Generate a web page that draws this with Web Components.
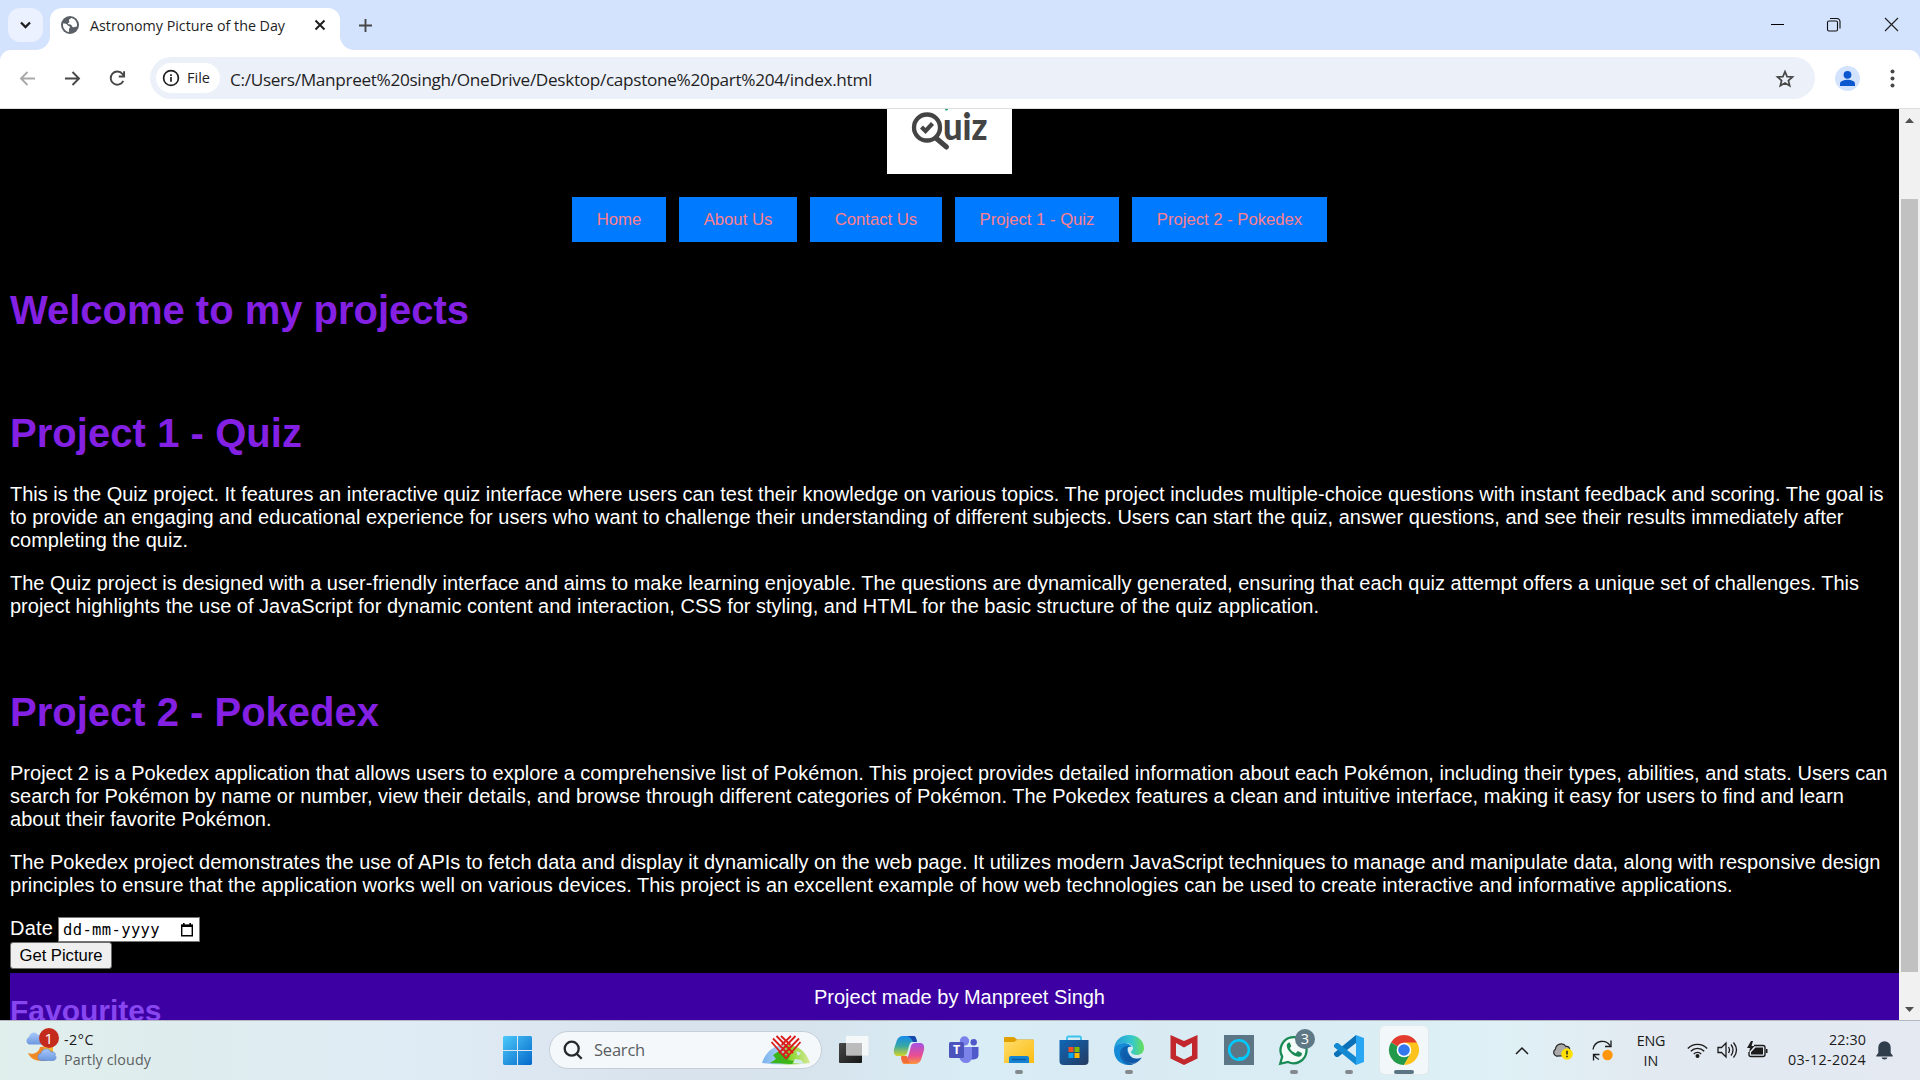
<!DOCTYPE html>
<html lang="en">
<head>
<meta charset="utf-8">
<title>Astronomy Picture of the Day</title>
<style>
html,body{margin:0;padding:0;height:1080px;width:1920px;overflow:hidden;background:#000}
</style>
</head>
<body>
<desktop-screen></desktop-screen>
<script>
const define=(name,html)=>{
  const t=document.createElement('template');t.innerHTML=html;
  customElements.define(name,class extends HTMLElement{
    constructor(){super();this.attachShadow({mode:'open'}).append(t.content.cloneNode(true));}
  });
};
const UI='"Open Sans","Noto Sans",sans-serif';

define('desktop-screen',`<style>:host{display:flex;flex-direction:column;width:1920px;height:1080px;overflow:hidden}</style>
<tab-strip></tab-strip><tool-bar></tool-bar><page-viewport></page-viewport><task-bar></task-bar>`);

define('tab-strip',`<style>
:host{display:flex;height:50px;background:#d3e3fd;font:14.3px/20px ${UI};color:#1f1f1f}
.s{margin:8px 7px 0 8px;width:35px;height:34px;border-radius:12px;background:#ebf1fe;flex:none}
.tab{margin-top:8px;width:290px;height:42px;background:#fff;border-radius:12px 12px 0 0;display:flex;align-items:center;box-sizing:border-box;padding:0 14px 8px 11px;position:relative}
.tab::before,.tab::after{content:"";position:absolute;bottom:0;width:14px;height:14px}
.tab::before{left:-14px;background:radial-gradient(circle at 0 0,transparent 13.5px,#fff 14.3px)}
.tab::after{right:-14px;background:radial-gradient(circle at 100% 0,transparent 13.5px,#fff 14.3px)}
fit-text{margin-left:11px;margin-right:auto;padding-top:1px}
svg{display:block;flex:none}
.plus{margin:15px 0 0 15px}
.win{margin-left:auto;display:flex;padding:17px 21px 0 0;gap:42px}
</style>
<svg class="s" viewBox="0 0 35 34" fill="none" stroke="#1f1f1f" stroke-width="2.3"><path d="M13 14.5l4.5 4.5 4.5-4.5"/></svg>
<div class="tab">
<svg width="18" height="18" viewBox="0 0 18 18"><circle cx="9" cy="9" r="9" fill="#5b6066"/><path d="M2 7.6c2.3.1 3.7.2 4.600 1.600.6 1 1.800.3 2.300 1.500.4 1.200-1 1.600-1 2.700 0 .8.3 1.500.2 2.500C4.500 15.500 2 12.500 2 9zM10 2.100c-.3 1-1.600 1-2 1.800-.4 1 .6 1.300.4 2.200-.2 1-1.700.7-1.500 1.700.3 1.200 2.400.3 3.400 1.200.9.8.6 1.900 1.600 2.200 1.300.4 2-.6 3.700-.5.4-.9.5-1.500.4-2.300C15.600 5 13.200 2.500 10 2.100z" fill="#fff"/></svg>
<fit-text w="195">Astronomy Picture of the Day</fit-text>
<svg width="12" height="12" viewBox="0 0 12 12" stroke="#1f1f1f" stroke-width="2"><path d="M1.500 1.500l9 9M10.500 1.500l-9 9"/></svg>
</div>
<svg class="plus" width="21" height="21" viewBox="0 0 21 21" stroke="#474747" stroke-width="1.900"><path d="M10.500 4v13M4 10.500h13"/></svg>
<div class="win">
<svg width="15" height="15" viewBox="0 0 15 15" stroke="#000"><path d="M1 7.500h13"/></svg>
<svg style="margin:0 1px 0 -1px" width="15" height="15" viewBox="0 0 15 15" fill="none" stroke="#111" stroke-width="1.100"><rect x="1.500" y="4" width="10" height="10" rx="1.500"/><path d="M4 1.500h7a3 3 0 0 1 3 3v7"/></svg>
<svg width="15" height="15" viewBox="0 0 15 15" stroke="#222" stroke-width="1.200"><path d="M1 1l13 13M14 1L1 14"/></svg>
</div>`);

define('tool-bar',`<style>
:host{display:block;background:#d3e3fd;height:59px}
.bar{display:flex;align-items:center;height:59px;box-sizing:border-box;border-bottom:1px solid #dcdfe2;background:#fff;border-radius:11px 11px 0 0;padding:0 17px 2px 17px}
svg{display:block;flex:none}
.nav{display:flex;gap:24px}
.omni{margin:0 20px 0 22px;width:1665px;height:42px;border-radius:21px;background:#ecf0f9;display:flex;align-items:center;box-sizing:border-box;padding:0 20px 0 6px;font:17.200px/24px ${UI};color:#1f1f1f}
.chip{width:64px;height:30px;border-radius:15px;background:#fff;display:flex;align-items:center;box-sizing:border-box;padding-left:6px;gap:7px;font-size:14.500px;font-weight:500;margin-right:10px;flex:none}
.url{margin-right:auto;padding-top:3px}
.omni>svg{margin-top:2px}
.p{margin-right:22px}
</style>
<div class="bar">
<div class="nav">
<svg width="21" height="21" viewBox="0 0 21 21" fill="none" stroke="#a9a9a9" stroke-width="1.900"><path d="M18 10.500H4.500M10.500 4L4 10.500l6.500 6.500"/></svg>
<svg width="21" height="21" viewBox="0 0 21 21" fill="none" stroke="#474747" stroke-width="1.900"><path d="M3 10.500h13.500M10.500 4l6.500 6.500-6.500 6.500"/></svg>
<svg width="21" height="21" viewBox="0 0 21 21" fill="none" stroke="#474747" stroke-width="1.900"><path d="M16.300 12.800A6.600 6.600 0 1 1 15.500 6l1.500 2M17.100 3.200v5.300h-5.300"/></svg>
</div>
<div class="omni"><div class="chip"><svg width="18" height="18" viewBox="0 0 18 18" fill="none" stroke="#1f1f1f" stroke-width="1.700"><circle cx="9" cy="9" r="7.400"/><path d="M9 8v4.800M9 5.200v1.700"/></svg><fit-text w="23">File</fit-text></div>
<fit-text class="url" w="642">C:/Users/Manpreet%20singh/OneDrive/Desktop/capstone%20part%204/index.html</fit-text>
<svg width="20" height="20" viewBox="0 0 20 20" fill="none" stroke="#474747" stroke-width="1.700"><path d="M10 2.600l2.100 5 5.400.4-4.100 3.500 1.300 5.300L10 14l-4.700 2.800 1.300-5.300L2.500 8l5.400-.4z"/></svg></div>
<svg class="p" width="25" height="25" viewBox="0 0 25 25"><circle cx="12.500" cy="12.500" r="12.500" fill="#d3e3fd"/><g fill="#0b57d0"><circle cx="12.500" cy="8.800" r="3.900"/><path d="M5 20v-2.200c0-3 4.500-4 7.500-4s7.500 1 7.500 4V20z"/></g></svg>
<svg width="21" height="21" viewBox="0 0 21 21" fill="#474747"><circle cx="10.500" cy="3.500" r="2"/><circle cx="10.500" cy="10.500" r="2"/><circle cx="10.500" cy="17.500" r="2"/></svg>
</div>`);

define('page-viewport',`<style>
:host{display:flex;height:911px;background:#000}
main{width:1899px;height:911px;overflow:hidden;position:relative;box-sizing:border-box;padding-left:10px;color:#fff;font:20px/23px "Liberation Sans",Arial,sans-serif}
.logo{display:block;margin:0 auto;position:relative;left:-5px}
nav{display:flex;justify-content:center;gap:13px;padding:23px 10px 0 0}
.date{display:flex;gap:5px;align-items:center;height:25px;margin-top:20px}
.date>fit-text{margin-bottom:2px}
.inp{width:142px;height:25px;box-sizing:border-box;border:1px solid #767676;background:#fff;color:#000;display:flex;align-items:center;padding:0 5px 0 4px;font:15.500px/22px "DejaVu Sans Mono",monospace;justify-content:space-between}
.btn{width:102px;height:27px;box-sizing:border-box;border:1px solid #6b6b6b;border-radius:3px;background:#efefef;color:#000;display:flex;align-items:center;justify-content:center;font-size:16.670px;line-height:20px}
.fav{height:70px;background:#3c00a3;margin-top:4px;padding-top:21px}
h2{margin:0;font:bold 30px/34px "Liberation Sans",Arial,sans-serif;color:#8746ef}
footer{position:absolute;left:10px;bottom:0;width:1899px;height:47px;display:flex;align-items:center;justify-content:center;box-sizing:border-box;padding-top:2px}
</style>
<main>
<svg class="logo" width="125" height="65" viewBox="0 0 125 65"><rect width="125" height="65" fill="#fff"/><circle cx="59.500" cy="0" r="1.600" fill="#24a06b"/>
<g fill="none" stroke="#444"><circle cx="40" cy="18.500" r="13" stroke-width="4.300"/><path d="M49.500 29.500l10 8.500" stroke-width="5" stroke-linecap="round"/><path d="M34.500 18l4 4 7-7.500" stroke-width="4.200"/></g>
<text x="56" y="31" font-family="Lato,sans-serif" font-weight="900" font-size="37" textLength="44.500" lengthAdjust="spacingAndGlyphs" fill="#444">uiz</text></svg>
<nav><nav-link style="width:94px">Home</nav-link><nav-link style="width:118px">About Us</nav-link><nav-link style="width:132px">Contact Us</nav-link><nav-link style="width:164px">Project 1 - Quiz</nav-link><nav-link style="width:195px">Project 2 - Pokedex</nav-link></nav>
<page-heading style="margin-top:45px"><fit-text w="459">Welcome to my projects</fit-text></page-heading>
<page-heading style="margin-top:77px"><fit-text w="292">Project 1 - Quiz</fit-text></page-heading>
<text-block style="margin-top:27px"><fit-text w="1873.500">This is the Quiz project. It features an interactive quiz interface where users can test their knowledge on various topics. The project includes multiple-choice questions with instant feedback and scoring. The goal is</fit-text><fit-text w="1833.500">to provide an engaging and educational experience for users who want to challenge their understanding of different subjects. Users can start the quiz, answer questions, and see their results immediately after</fit-text><fit-text w="178">completing the quiz.</fit-text></text-block>
<text-block style="margin-top:20px"><fit-text w="1849">The Quiz project is designed with a user-friendly interface and aims to make learning enjoyable. The questions are dynamically generated, ensuring that each quiz attempt offers a unique set of challenges. This</fit-text><fit-text w="1309">project highlights the use of JavaScript for dynamic content and interaction, CSS for styling, and HTML for the basic structure of the quiz application.</fit-text></text-block>
<page-heading style="margin-top:71px"><fit-text w="369">Project 2 - Pokedex</fit-text></page-heading>
<text-block style="margin-top:27px"><fit-text w="1877.500">Project 2 is a Pokedex application that allows users to explore a comprehensive list of Pokémon. This project provides detailed information about each Pokémon, including their types, abilities, and stats. Users can</fit-text><fit-text w="1834">search for Pokémon by name or number, view their details, and browse through different categories of Pokémon. The Pokedex features a clean and intuitive interface, making it easy for users to find and learn</fit-text><fit-text w="261.500">about their favorite Pokémon.</fit-text></text-block>
<text-block style="margin-top:20px"><fit-text w="1870.500">The Pokedex project demonstrates the use of APIs to fetch data and display it dynamically on the web page. It utilizes modern JavaScript techniques to manage and manipulate data, along with responsive design</fit-text><fit-text w="1722.500">principles to ensure that the application works well on various devices. This project is an excellent example of how web technologies can be used to create interactive and informative applications.</fit-text></text-block>
<div class="date"><fit-text w="43">Date</fit-text><div class="inp"><fit-text w="97">dd-mm-yyyy</fit-text><svg width="14" height="16" viewBox="0 0 14 16"><path d="M1.700 3.500v10.300h10.600V3.500z" fill="none" stroke="#000" stroke-width="1.400"/><path d="M1 2.500h12v2.500H1zM3 1h1.600v2H3zM9.400 1H11v2H9.400z"/></svg></div></div>
<div class="btn"><fit-text w="83">Get Picture</fit-text></div>
<div class="fav"><h2><fit-text w="151.500">Favourites</fit-text></h2></div>
<footer><fit-text w="291">Project made by Manpreet Singh</fit-text></footer>
</main><scroll-bar></scroll-bar>`);

define('nav-link',`<style>:host{display:flex;height:45px;background:#007bff;color:#ff7f8c;align-items:center;justify-content:center;font:16.670px/20px "Liberation Sans",Arial,sans-serif;white-space:nowrap}</style><slot></slot>`);
define('page-heading',`<style>:host{display:block;height:46px;font:bold 40px/46px "Liberation Sans",Arial,sans-serif;color:#8420e3}</style><slot></slot>`);
define('text-block',`<style>:host{display:flex;flex-direction:column;align-items:flex-start}</style><slot></slot>`);
define('scroll-bar',`<style>:host{display:flex;flex-direction:column;align-items:center;width:21px;height:911px;background:#f1f1f1;box-sizing:border-box;padding:9px 0 8px}
.t{width:17px;height:773px;background:#c1c1c1;margin:76px 0 auto}svg{display:block}</style>
<svg width="9" height="5" viewBox="0 0 9 5"><path d="M0 5L4.500 0 9 5z" fill="#505050"/></svg><div class="t"></div><svg width="9" height="5" viewBox="0 0 9 5"><path d="M0 0l4.500 5L9 0z" fill="#505050"/></svg>`);

define('task-app',`<style>:host{display:flex;flex:none;width:55px;height:59px;align-items:center;justify-content:center}
.b{width:48px;height:48px;box-sizing:border-box;border-radius:5px;display:flex;flex-direction:column;align-items:center;padding-top:9px;margin-top:-1px}
i{display:block;width:8px;height:4px;border-radius:2px;margin-top:5px}
:host([open]) i{background:#84898d}
:host([active]) .b{background:#f2f8fa;box-shadow:0 0 0 1px #e1e9ec}
:host([active]) i{background:#5c7584;width:20px}
::slotted(svg){display:block;width:30px;height:30px;overflow:visible}</style><div class="b"><slot></slot><i></i></div>`);

define('task-bar',`<style>
:host{display:flex;height:60px;box-sizing:border-box;border-top:1px solid #b4b7c2;background:linear-gradient(90deg,#e0efec 0,#dfecee 180px,#e0ecf5 400px,#d9e3ee 650px,#d7e3ed 800px,#d8edf5 980px,#d9eaf3 1150px,#daeef4 1400px,#dff1f6 1500px,#e2e9f1 1650px,#e4e9f2 1920px);font:14.300px/20px ${UI};color:#1b1b1b;align-items:center}
svg{display:block;flex:none}
.w{display:flex;width:503px;height:59px;gap:4px}
.w>svg{margin:5px 0 0 24px}
.w>div{display:flex;flex-direction:column;padding-top:9px;align-items:flex-start}
.w .c{color:#5c6162}
.search{margin-left:17px;width:273px;height:38px;box-sizing:border-box;border-radius:19px;background:#f4f8fb;border:1px solid #c6cfd9;display:flex;align-items:center;padding:0 11px 0 13px;font-size:16.500px;color:#5a5e61;margin-top:-1px}
.search fit-text{margin:0 auto 0 11px}
.apps{display:flex;margin-left:4px}
.tray{display:flex;align-items:center;margin-left:auto;height:59px;padding-right:27px}
.col{display:flex;flex-direction:column}
</style>
<div class="w"><svg width="36" height="42" viewBox="0 0 36 42"><defs><linearGradient id="cl" x2="0" y2="1"><stop stop-color="#a9c8fa"/><stop offset="1" stop-color="#6c98e0"/></linearGradient></defs><path d="M4 27c5 2 11 0 12-6l13-1v7c-1 5-5 8-11 8-7 0-12-3-14-8z" fill="#f08a24"/><path d="M20 20h9v5l-9 3z" fill="#f5b335"/><path d="M5 18.500a4 4 0 0 1 0-7.500c1-5 7-6 9-2 4-1 7 2 6 6 0 2-1 3.500-3 3.500z" fill="url(#cl)"/><path d="M17 34.500a3.700 3.700 0 0 1 0-7.300c1-5 8-6 10-1.200 4-.5 5 2 4 3.500 2 1.500 1 5-2 5z" fill="url(#cl)" stroke="#5a84cd" stroke-width=".6"/><circle cx="25" cy="12" r="10" fill="#c42b1c"/><text x="24.800" y="17.500" text-anchor="middle" font-family="Open Sans" font-size="15" fill="#fff">1</text></svg>
<div><fit-text w="30">-2°C</fit-text><fit-text class="c" w="87">Partly cloudy</fit-text></div></div>
<svg width="29" height="29" viewBox="0 0 29 29"><defs><linearGradient id="wn" x2="1" y2="1"><stop stop-color="#4cc9fa"/><stop offset="1" stop-color="#0468ca"/></linearGradient></defs><path fill="url(#wn)" d="M1 0h13v14H0V1zM15 0h13l1 1v13H15zM0 15h14v14H1l-1-1zM15 15h14v13l-1 1H15z"/></svg>
<div class="search"><svg width="20" height="20" viewBox="0 0 20 20" fill="none" stroke="#23282b" stroke-width="2.300"><circle cx="8.700" cy="8.700" r="7"/><path d="M13.700 13.700l5 5"/></svg><fit-text w="51">Search</fit-text>
<svg width="48" height="30" viewBox="0 0 48 30"><defs><linearGradient id="gl"><stop stop-color="#79b2f0"/><stop offset=".4" stop-color="#aed3f3"/><stop offset=".55" stop-color="#82d528"/><stop offset="1" stop-color="#d6e998"/></linearGradient></defs><path d="M0 28Q6 10 24 10t24 18q-24 3-48 0z" fill="url(#gl)"/><path d="M8 28l6-4-3-4 6-4 4 3 7 2-2 4 6 1-2 3z" fill="#3bb51b"/><path d="M31 28l2-4 6 1 3 4zM34 16l5 2-3 3z" fill="#d5ecef"/><path d="M9.500 7L24 23.500 38.500 7M11 3.500l16.500 17M37 3.500l-16.500 17M14.500 1L31 18M33.500 1L17 18M19 1l9.500 9M29 1l-9.500 9" fill="none" stroke="#db1b1b" stroke-width="1.800"/></svg></div>
<div class="apps">
<task-app><svg viewBox="0 0 30 30"><defs><linearGradient id="tv" x2="1" y2="1"><stop stop-color="#484848"/><stop offset="1" stop-color="#171717"/></linearGradient></defs><rect y="8" width="23" height="20" rx="1" fill="url(#tv)"/><rect x="7" y="1" width="22.500" height="19.500" rx="1" fill="#fafafa" opacity=".85"/><path d="M7 8h16v12.500H7z" fill="#aaa" opacity=".65"/></svg></task-app>
<task-app><svg viewBox="0 0 30 30"><defs><linearGradient id="c1" x2="0" y2="1"><stop stop-color="#168cec"/><stop offset=".5" stop-color="#37a8a5"/><stop offset="1" stop-color="#d5d425"/></linearGradient><linearGradient id="c2" x2="0" y2="1"><stop stop-color="#a652e4"/><stop offset=".6" stop-color="#e94e91"/><stop offset="1" stop-color="#fd963b"/></linearGradient></defs><path d="M9 1h11q2 0 3 6h-5q-2 0-3 4l-2 7q-1 3-4 3H3q-4-1-3-7L3 5q2-4 6-4z" fill="url(#c1)"/><path d="M16 1h4q2 0 3 6h-4q-2-5-6-6z" fill="#1847ad"/><path d="M21 29H10q-2 0-3-6h5q2 0 3-4l2-8q1-3 4-3h6q4 1 3 7l-3 10q-2 4-6 4z" fill="url(#c2)"/><path d="M7 21h6q0 5 3 7h-5q-3 0-4-7z" fill="#f26a35"/></svg></task-app>
<task-app><svg viewBox="0 0 30 30"><circle cx="15.500" cy="6" r="4.700" fill="#7b83eb"/><circle cx="24.700" cy="7.200" r="3.200" fill="#5059c9"/><path d="M20 12h9.500v8q0 4-5 4.500H20z" fill="#5059c9"/><path d="M10 12h13v10q-1 6-6 6t-7-6z" fill="#7b83eb"/><rect y="7" width="15" height="16" rx="1.500" fill="#4b53bc"/><text x="7.500" y="19.300" text-anchor="middle" font-family="Open Sans" font-weight="700" font-size="12.500" fill="#fff">T</text></svg></task-app>
<task-app open><svg viewBox="0 0 30 30"><defs><linearGradient id="fo" x2="1" y2="1"><stop stop-color="#ffdd6b"/><stop offset="1" stop-color="#fbbc12"/></linearGradient></defs><path d="M0 3q0-1 1-1h9l3 2.500H29q1 0 1 1V9H0z" fill="#dfa000"/><path d="M0 7h10l3-2h16q1 0 1 1v22H0z" fill="url(#fo)"/><path d="M5 28v-5q0-2 2-2h16q2 0 2 2v5z" fill="#1584d2"/><path d="M8 24.500h14" stroke="#0c59a4" stroke-width="1.500"/></svg></task-app>
<task-app><svg viewBox="0 0 30 30"><defs><linearGradient id="st" x2="1" y2="1"><stop stop-color="#0f67b7"/><stop offset="1" stop-color="#243a60"/></linearGradient></defs><path d="M8 6V3q0-1.500 1.500-1.500h11Q22 1.500 22 3v3" fill="none" stroke="#3cc4ef" stroke-width="1.800"/><path d="M.5 5h29v21q0 4-4 4h-21q-4 0-4-4z" fill="url(#st)"/><path fill="#f25022" d="M9.500 12h5v5h-5z"/><path fill="#7fba00" d="M15.500 12h5v5h-5z"/><path fill="#00a4ef" d="M9.500 18h5v5h-5z"/><path fill="#ffb900" d="M15.500 18h5v5h-5z"/></svg></task-app>
<task-app open><svg viewBox="0 0 30 30"><defs><linearGradient id="e1"><stop stop-color="#239bdd"/><stop offset=".6" stop-color="#36c8cd"/><stop offset="1" stop-color="#67df55"/></linearGradient><linearGradient id="e2" x2="0" y2="1"><stop stop-color="#1289d9"/><stop offset="1" stop-color="#0e54a3"/></linearGradient></defs><path d="M0 14C1 5 7 0 15 0c9 0 15 6 15 13 0 5-4 7-7 7-4 0-6-1.500-6-3 0-1 2-1.500 2-4 0-3-4-5-8-5C6 8 2 10 0 14z" fill="url(#e1)"/><path d="M0 15c0-4 5-7 10-7 4 0 7 2 8 4-4-1-8 2-8 7 0 5 4 9 9 10.500C8 32 0 25 0 15z" fill="#158bd8"/><path d="M14 11.500c-5 2-7 7-4 12 3 5 12 7 18-1-4 2.500-9 2-12-2-2-3-3-6-2-9z" fill="url(#e2)"/><path d="M6 19c0-6 5-9 10-8-3 1-4 5-2 8 3 5 9 5.500 13.500 3.500C25 27 20 30 15 30 10 29 6 24 6 19z" fill="#0f57a6" opacity=".75"/></svg></task-app>
<task-app><svg viewBox="0 0 30 30"><path d="M1.500 0L15 6l13.500-6v23.500L15 30 1.500 23.500zM7 8v12.500l8 4 8-4V8l-8 4.500z" fill="#c1272d" fill-rule="evenodd"/></svg></task-app>
<task-app><svg viewBox="0 0 30 30"><path fill="#5d7685" d="M0 0h30v30H0z"/><circle cx="15" cy="15" r="9.800" fill="none" stroke="#00caff" stroke-width="2.500"/><path d="M14 22h4q5-2 6.500-5-1 8-10.500 9z" fill="#00caff"/></svg></task-app>
<task-app open><svg viewBox="0 0 30 30"><path d="M1.200 28.800l2-7.200A13 13 0 1 1 9 27z" fill="#f3fbf9" stroke="#1a8a55" stroke-width="2.300"/><path d="M10 7.500c-3 1-3 5 0 8.500 3 4 8 6.500 11 5.500 2-.8 2-2 1.800-3.500l-4-1.900-2 2.200c-3-1-5-3-6-5.300l1.500-1.700L10.800 7.500z" fill="#1a8a55"/><circle cx="26" cy="4" r="10" fill="#5f7885"/><text x="26" y="9.200" text-anchor="middle" font-family="Open Sans" font-size="14.500" fill="#fff">3</text></svg></task-app>
<task-app open><svg viewBox="0 0 30 30"><path d="M22 0v8L4 22H2l-2-2v-2z" fill="#0a70b8"/><path d="M22 30v-8L4 8H2L0 10v2z" fill="#1389d2"/><path d="M22 0v30l8-3V3z" fill="#29a6f4"/></svg></task-app>
<task-app open active><svg viewBox="0 0 30 30"><path d="M15 15L2 7.500A15 15 0 0 1 28 7.500z" fill="#e33b2e"/><path d="M15 15L2 7.500A15 15 0 0 0 15 30l6.500-11z" fill="#229a49"/><path d="M28 7.500H15l6.500 11L15 30A15 15 0 0 0 28 7.500z" fill="#fcc31e"/><circle cx="15" cy="15" r="7.300" fill="#fff"/><circle cx="15" cy="15" r="5.800" fill="#3478ed"/></svg></task-app>
</div>
<div class="tray">
<svg width="14" height="9" viewBox="0 0 14 9" fill="none" stroke="#1b1b1b" stroke-width="1.500"><path d="M1 8l6-6 6 6"/></svg>
<svg style="margin-left:23px;margin-top:1px" width="21" height="18" viewBox="0 0 21 18"><path d="M4.500 14.200A4 4 0 0 1 3.500 7C4 2 11 0 14 4.500c4-.5 5 4 2 9z" fill="#aaa" stroke="#222" stroke-width="1.200"/><circle cx="15" cy="12" r="5.800" fill="#ffe000"/><path d="M15 8.700v3.900M15 13.700v1.500" stroke="#222" stroke-width="1.500"/></svg>
<svg style="margin-left:19px;margin-top:-1px" width="21" height="22" viewBox="0 0 21 22" fill="none" stroke="#1b1b1b" stroke-width="1.300"><path d="M1 10.500C2.500 1 14 0 18 6.500M19 1.500v6h-6M7 20.500q-3-1-5-4.500M1.500 21.500V15.500h6"/><circle cx="15.500" cy="16" r="5.200" fill="#ff960b" stroke="none"/></svg>
<div class="col" style="align-items:center;width:30px;margin-left:23px"><fit-text w="28.500">ENG</fit-text><fit-text w="15">IN</fit-text></div>
<svg style="margin-left:21px;margin-top:-2px" width="21" height="16" viewBox="0 0 21 16" fill="none" stroke="#1b1b1b" stroke-width="1.400"><path d="M.8 6.500a13.500 13.500 0 0 1 19.400 0M3.800 9.200a9.400 9.400 0 0 1 13.400 0M6.800 11.900a5.200 5.200 0 0 1 7.400 0"/><circle cx="10.500" cy="14" r="1.300" fill="#1b1b1b"/></svg>
<svg style="margin-left:9px;margin-top:-1px" width="21" height="18" viewBox="0 0 21 18" fill="none" stroke="#1b1b1b" stroke-width="1.300"><path d="M1 6.500h3.500L9 2v14l-4.500-4.500H1zM11.500 6q2 3 0 6M14 3.500q4 5.500 0 11M16.500 1.500q6 7.500 0 15"/></svg>
<svg style="margin-left:9px;margin-top:-2px" width="21" height="18" viewBox="0 0 21 18"><path d="M7 4.500h9q2 0 2 2v7q0 2-2 2H4q-2 0-2-2V11" fill="none" stroke="#1b1b1b" stroke-width="1.400"/><path d="M8.500 6.500H16v7H4v-2.300zM19 8h1.500v4H19zM4 0L0 7h3L2 11.500 7.500 5H4.500L6 0z" fill="#1b1b1b"/></svg>
<div class="col" style="align-items:flex-end;width:79px;margin-left:19px;margin-top:-1px"><fit-text w="37">22:30</fit-text><fit-text w="78">03-12-2024</fit-text></div>
<svg style="margin-left:10px;margin-top:-1px" width="17" height="20" viewBox="0 0 17 20"><path d="M2.300 13V7.500a6.200 6.200 0 0 1 12.400 0V13l2 2.500v1H.3v-1zM5.500 17.500h6q-.5 2-3 2t-3-2z" fill="#303e4b"/></svg>
</div>`);

/* Single line of text whose tracking is adjusted to span the width given in "w". */
customElements.define('fit-text',class extends HTMLElement{
  constructor(){super();this.attachShadow({mode:'open'}).innerHTML='<style>:host{display:inline-block;white-space:nowrap;flex:none}</style><slot></slot>';}
  connectedCallback(){
    const n=this.textContent.length,w=parseFloat(this.getAttribute('w')),now=this.getBoundingClientRect().width;
    if(now&&w)this.style.letterSpacing=((w-now)/n).toFixed(4)+'px';
  }
});
</script>
</body>
</html>
